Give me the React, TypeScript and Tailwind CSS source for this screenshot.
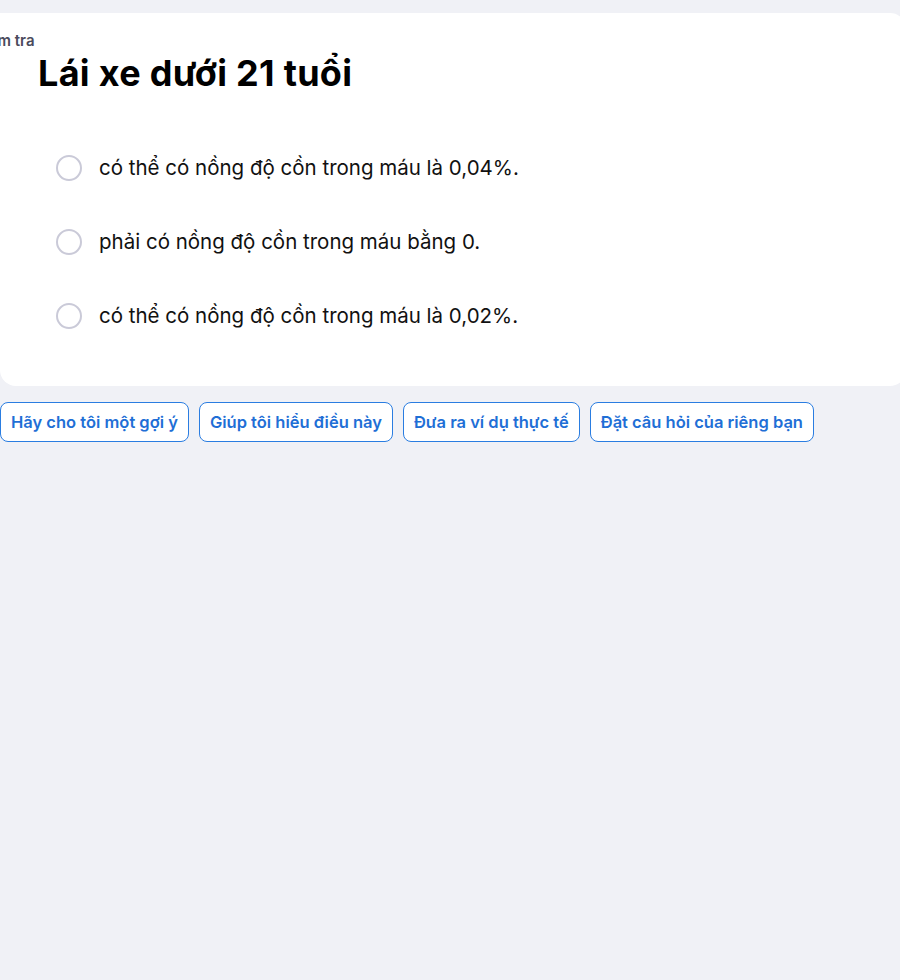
import React from 'react';

const options = [
  'có thể có nồng độ cồn trong máu là 0,04%.',
  'phải có nồng độ cồn trong máu bằng 0.',
  'có thể có nồng độ cồn trong máu là 0,02%.',
];

const prompts = [
  'Hãy cho tôi một gợi ý',
  'Giúp tôi hiểu điều này',
  'Đưa ra ví dụ thực tế',
  'Đặt câu hỏi của riêng bạn',
];

export default function App() {
  return (
    <div className="min-h-[980px] w-[900px] overflow-hidden bg-[#f0f1f6] pt-[13px] font-['Inter','Noto_Sans',sans-serif]">
      {/* Thẻ câu hỏi */}
      <div className="w-[906px] rounded-bl-2xl rounded-r-2xl bg-white pb-[56px]">
        <div className="-ml-[26px] pt-[18px] text-[15px] font-semibold leading-5 text-[#4b4b5c]">Kiểm tra</div>
        <h1 className="ml-[38px] mt-[2px] text-[36px] font-bold leading-10 tracking-[0.3px] text-black">Lái xe dưới 21 tuổi</h1>

        <div className="mt-[61px] flex flex-col gap-[46px] pl-[56px]">
          {options.map((opt) => (
            <label key={opt} className="flex h-7 items-center gap-[17px]">
              <span className="h-[26px] w-[26px] rounded-full border-2 border-[#cacad8] bg-white" />
              <span className="text-[20.5px] leading-7 text-[#111]">{opt}</span>
            </label>
          ))}
        </div>
      </div>

      {/* Gợi ý */}
      <div className="mt-4 flex gap-[10px]">
        {prompts.map((p) => (
          <button
            key={p}
            className="h-10 rounded-lg border border-[#2a7de1] bg-white px-[10px] text-[16.5px] font-semibold text-[#1f6fd6]"
          >
            {p}
          </button>
        ))}
      </div>
    </div>
  );
}
